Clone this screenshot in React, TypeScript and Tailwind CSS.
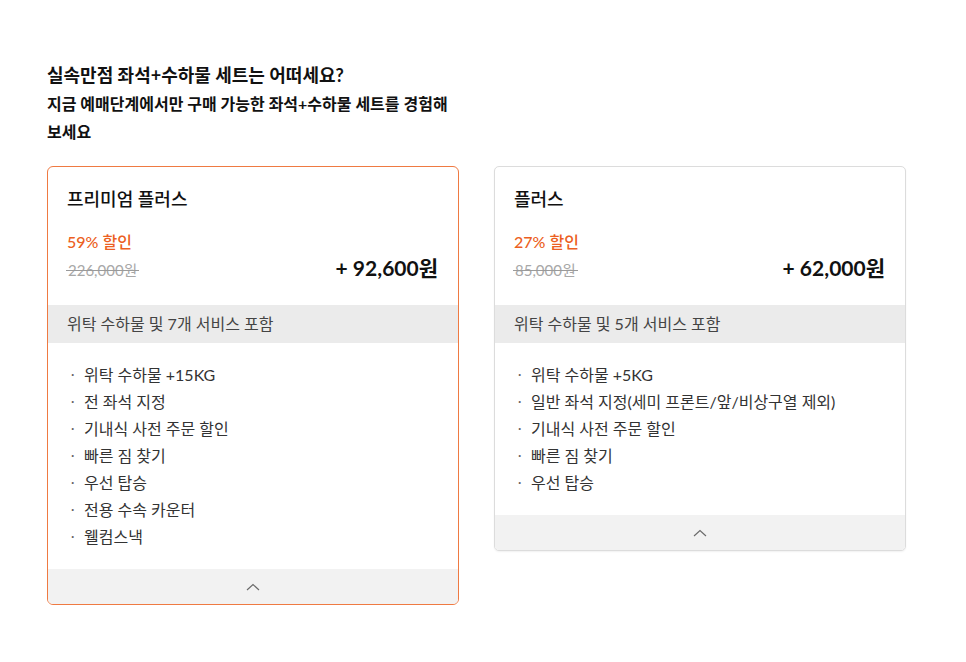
import React from "react";

type Plan = {
  name: string;
  discount: string;
  original: string;
  price: string;
  summary: string;
  items: string[];
  selected: boolean;
};

const plans: Plan[] = [
  {
    name: "프리미엄 플러스",
    discount: "59% 할인",
    original: "226,000원",
    price: "+ 92,600원",
    summary: "위탁 수하물 및 7개 서비스 포함",
    items: [
      "위탁 수하물 +15KG",
      "전 좌석 지정",
      "기내식 사전 주문 할인",
      "빠른 짐 찾기",
      "우선 탑승",
      "전용 수속 카운터",
      "웰컴스낵",
    ],
    selected: true,
  },
  {
    name: "플러스",
    discount: "27% 할인",
    original: "85,000원",
    price: "+ 62,000원",
    summary: "위탁 수하물 및 5개 서비스 포함",
    items: [
      "위탁 수하물 +5KG",
      "일반 좌석 지정(세미 프론트/앞/비상구열 제외)",
      "기내식 사전 주문 할인",
      "빠른 짐 찾기",
      "우선 탑승",
    ],
    selected: false,
  },
];

function Chevron() {
  return (
    <svg width="14" height="8" viewBox="0 0 14 8" fill="none">
      <path d="M1 7L7 1.5L13 7" stroke="#6b6b6b" strokeWidth="1.2" />
    </svg>
  );
}

function Card({ plan }: { plan: Plan }) {
  return (
    <div
      className={
        plan.selected
          ? "w-[412px] rounded-[6px] border-[1.5px] border-[#ef7a42] bg-white overflow-hidden"
          : "w-[412px] rounded-[5px] border border-[#dcdcdc] bg-white overflow-hidden shadow-[0_1px_2px_rgba(0,0,0,0.06)]"
      }
    >
      <div className="px-[19px] pt-[20px] h-[138px]">
        <div className="text-[18px] leading-[24px] font-medium text-[#111]">{plan.name}</div>
        <div className="mt-[21px] text-[16px] leading-[20px] font-medium text-[#ec5f22]">{plan.discount}</div>
        <div className="flex items-end justify-between">
          <div className="mt-[8px] ml-[1px] relative text-[15px] leading-[20px] text-[#a8a8a8]">
            {plan.original}
            <span className="absolute left-[-2px] right-[-2px] top-[10px] h-px bg-[#9a9a9a]" />
          </div>
          <div className="mr-[1px] mb-[-1px] text-[21px] leading-[26px] font-bold text-[#111]">{plan.price}</div>
        </div>
      </div>
      <div className="h-[38px] bg-[#ebebeb] px-[19px] flex items-center text-[16px] text-[#444]">
        {plan.summary}
      </div>
      <ul className="pt-[18px] pb-[19px] pl-[23px] pr-[20px]">
        {plan.items.map((it) => (
          <li key={it} className="flex items-center h-[27px] text-[16px] text-[#333]">
            <span className="w-[13px] text-[#666] text-[13px]">·</span>
            <span>{it}</span>
          </li>
        ))}
      </ul>
      <div className="h-[35px] bg-[#f2f2f2] flex items-center justify-center">
        <Chevron />
      </div>
    </div>
  );
}

export default function App() {
  return (
    <div
      className="min-h-[662px] w-[966px] bg-white pl-[47px] pt-[62px]"
      style={{ fontFamily: "Lato, 'Noto Sans CJK KR', sans-serif" }}
    >
      <div className="w-[412px]">
        <h1 className="text-[18px] leading-[26px] font-bold text-[#111]">실속만점 좌석+수하물 세트는 어떠세요?</h1>
        <p className="mt-[2px] text-[16px] leading-[28px] font-bold text-[#111]">
          지금 예매단계에서만 구매 가능한 좌석+수하물 세트를 경험해 보세요
        </p>
      </div>
      <div className="mt-[20px] flex items-start gap-[35px]">
        {plans.map((p) => (
          <Card key={p.name} plan={p} />
        ))}
      </div>
    </div>
  );
}
